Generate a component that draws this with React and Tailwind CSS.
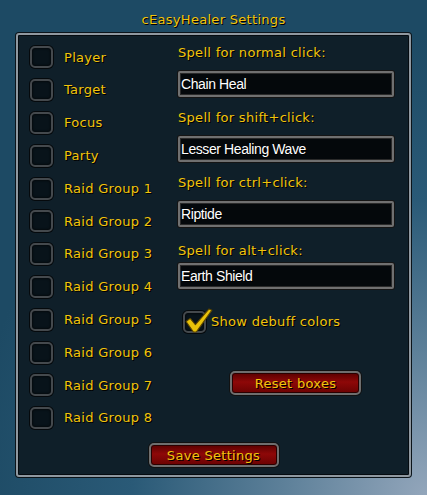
import React, { useState } from "react";

const units = [
  "Player",
  "Target",
  "Focus",
  "Party",
  "Raid Group 1",
  "Raid Group 2",
  "Raid Group 3",
  "Raid Group 4",
  "Raid Group 5",
  "Raid Group 6",
  "Raid Group 7",
  "Raid Group 8",
];

const spells = [
  { key: "normal", label: "Spell for normal click:", value: "Chain Heal", top: "", gap: "mt-[9px]" },
  { key: "shift", label: "Spell for shift+click:", value: "Lesser Healing Wave", top: "mt-[12px]", gap: "mt-[9px]" },
  { key: "ctrl", label: "Spell for ctrl+click:", value: "Riptide", top: "mt-[12px]", gap: "mt-[9px]" },
  { key: "alt", label: "Spell for alt+click:", value: "Earth Shield", top: "mt-[15px]", gap: "mt-[3px]" },
];

const gold = "text-[#f2c40c] tracking-[0.3px] [text-shadow:1px_1px_0_#000]";
const font = "font-['DejaVu_Sans',sans-serif]";

const Box = ({ checked, onClick }) => (
  <button
    onClick={onClick}
    className="relative w-[23px] h-[22px] shrink-0 rounded-[5px] border-2 border-[#44494d] bg-[#08131a] shadow-[inset_0_0_3px_#000,0_0_0_1px_#05090c]"
  >
    {checked && (
      <svg className="absolute -left-[1px] -top-[6px] w-[29px] h-[27px]" viewBox="0 0 28 26">
        <path
          d="M2 14 L6 11 L11 17 L24 2 L27 3 L12 24 L9 24 Z"
          fill="#e8c20a"
          stroke="#5a4400"
          strokeWidth="1"
          strokeLinejoin="round"
        />
      </svg>
    )}
  </button>
);

const RedButton = ({ children, className = "", onClick }) => (
  <button
    onClick={onClick}
    className={`h-[24px] rounded-[5px] border-2 border-[#6e6e6e] bg-[linear-gradient(#5a0000,#8e0808_45%,#6a0202)] shadow-[0_0_0_1px_#111,inset_0_0_0_1px_#2a0000] text-[13px] leading-none ${gold} ${font} ${className}`}
  >
    {children}
  </button>
);

export default function App() {
  const [units_, setUnits] = useState({});
  const [debuff, setDebuff] = useState(true);
  const [form, setForm] = useState(Object.fromEntries(spells.map(s => [s.key, s.value])));

  return (
    <div className="w-[427px] h-[495px] overflow-hidden bg-[radial-gradient(circle_at_100%_100%,#93a6bb_0%,#5d8099_22%,#2a5a77_45%,#1d4a64_70%)] flex flex-col">
      <div className={`h-[33px] pt-[11px] text-center text-[13px] leading-[18px] ${gold} ${font}`}>
        cEasyHealer Settings
      </div>

      {/* main panel */}
      <div className="ml-[16px] w-[395px] h-[444px] rounded-[3px] border-2 border-[#8f98a0] bg-[#0f1f29] shadow-[0_0_0_1px_#0b141a,inset_0_0_0_1px_#050b10] flex flex-col">
        <div className="flex">
          <div className="w-[160px] pl-[12px] pt-[6px]">
            {units.map(u => (
              <div key={u} className="h-[32.8px] flex items-center gap-[11px]">
                <Box checked={!!units_[u]} onClick={() => setUnits(p => ({ ...p, [u]: !p[u] }))} />
                <span className={`text-[13px] ${gold} ${font}`}>{u}</span>
              </div>
            ))}
          </div>

          <div className="w-[216px] pt-[9px] flex flex-col">
            {spells.map(s => (
              <div key={s.key} className={s.top}>
                <div className={`h-[18px] leading-[18px] text-[13px] ${gold} ${font}`}>{s.label}</div>
                <input
                  value={form[s.key]}
                  onChange={e => setForm(p => ({ ...p, [s.key]: e.target.value }))}
                  className={`${s.gap} block w-[216px] h-[26px] rounded-[2px] border-2 border-[#707070] bg-[#04080b] shadow-[0_0_0_1px_#151515,inset_0_0_0_1px_#2a2a2a] pl-[1px] text-[14px] tracking-[-0.4px] text-white font-['Liberation_Sans',Arial,sans-serif] [text-shadow:1px_1px_0_#000] outline-none`}
                />
              </div>
            ))}

            <div className="mt-[22px] ml-[5px] flex items-center gap-[5px]">
              <Box checked={debuff} onClick={() => setDebuff(d => !d)} />
              <span className={`text-[13px] ${gold} ${font}`}>Show debuff colors</span>
            </div>

            <RedButton className="mt-[38px] ml-[52px] w-[131px]">Reset boxes</RedButton>
          </div>
        </div>

        <div className="mt-auto pb-[8px] flex justify-center">
          <RedButton className="w-[130px] h-[23px]">Save Settings</RedButton>
        </div>
      </div>
    </div>
  );
}
